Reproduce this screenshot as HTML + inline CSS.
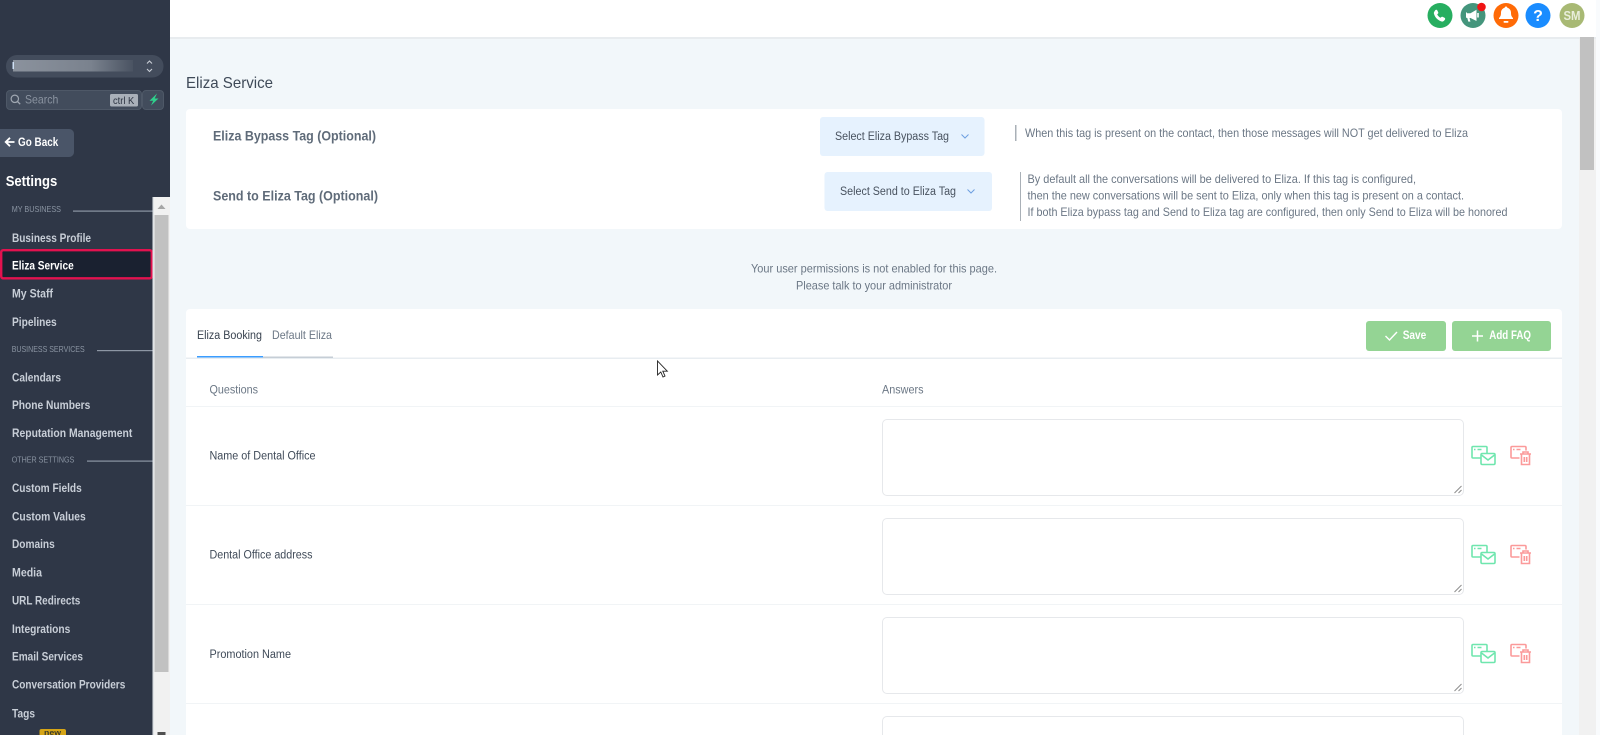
<!DOCTYPE html>
<html><head><meta charset="utf-8"><title>Eliza Service</title>
<style>
html,body{margin:0;padding:0;width:1600px;height:735px;overflow:hidden;background:#f2f7fa}
svg{display:block;position:absolute;left:0;top:0}
text{font-family:"Liberation Sans",sans-serif;font-size:12px}
.nav{font-weight:bold;fill:#c8ced7;font-size:11.5px}
.sec{fill:#8b95a3;font-size:8.5px}
.m{fill:#6b7785;font-size:12px}
.d{fill:#3f4a58;font-size:11.5px}
.lbl{font-weight:bold;fill:#5f6b79;font-size:13.5px}
.btn{fill:#48525f;font-size:11.5px}
.w{fill:#fff;font-weight:bold;font-size:11.5px}
</style></head><body>
<svg width="1600" height="735" viewBox="0 0 1600 735" xmlns="http://www.w3.org/2000/svg">
<defs>
<linearGradient id="bl" x1="0" x2="1" y1="0" y2="0"><stop offset="0" stop-color="#8b929d"/><stop offset=".65" stop-color="#7a828e"/><stop offset="1" stop-color="#4a5362"/></linearGradient>
</defs>
<rect width="1600" height="735" fill="#f2f7fa"/>

<!-- top bar -->
<rect x="1596" y="0" width="4" height="735" fill="#f9fbfd"/>
<rect x="170" y="37" width="1426" height="2" fill="#e8ecef"/>
<rect x="170" y="0" width="1426" height="37" fill="#fff"/>

<circle cx="1440" cy="15.5" r="12.5" fill="#27ae60"/>
<path d="M1435.2 10.2c.7-.7 1.700-.6 2.100.2l.9 1.800c.3.600.1 1.200-.4 1.600l-.6.500c.6 1.500 1.800 2.800 3.300 3.500l.6-.6c.4-.4 1-.5 1.600-.3l1.800.9c.8.400.9 1.400.3 2.100l-.9 1c-.7.700-1.700.9-2.700.5-3.500-1.300-6.200-4-7.200-7.500-.3-1-.1-2 .6-2.700z" fill="#fff"/>
<circle cx="1473" cy="15.5" r="12.5" fill="#44957c"/>
<path d="M1467 13.200h3.500l6-3.400v11.200l-6-3h-1l.9 3.600h-2.100l-1-3.600H1467c-.6 0-1-.4-1-1v-3.800c0-.6.400-1 1-1z" fill="#fff"/><path d="M1478 13v4.500" stroke="#fff" stroke-width="1.600"/>
<circle cx="1481.5" cy="7" r="4.3" fill="#f01414"/>
<circle cx="1506" cy="15.5" r="12.5" fill="#ff6a06"/>
<path d="M1506 6.500c.8 0 1.300.5 1.300 1.200 2.400.6 3.700 2.600 3.700 5.100 0 2.600.6 3.900 2 5.200v1h-14v-1c1.400-1.300 2-2.600 2-5.200 0-2.500 1.300-4.500 3.700-5.100 0-.7.500-1.200 1.300-1.200z" fill="#fff"/><rect x="1503.500" y="21" width="5" height="1.800" rx=".9" fill="#fff"/>
<circle cx="1538" cy="15.5" r="12.5" fill="#1a8cff"/>
<text x="1538" y="21" text-anchor="middle" style="font-size:16px;font-weight:bold;fill:#fff">?</text>
<circle cx="1572" cy="15.5" r="12.5" fill="#a8b974"/>
<text x="1563.500" y="20" textLength="17" lengthAdjust="spacingAndGlyphs" style="font-size:12.5px;font-weight:bold;fill:#e9eedb">SM</text>

<!-- main scrollbar -->
<rect x="1579" y="39" width="17" height="696" fill="#f1f1f1"/>
<rect x="1580" y="37" width="14" height="133" fill="#c1c1c1"/>

<text x="186" y="88" textLength="87" lengthAdjust="spacingAndGlyphs" style="font-size:16px;fill:#3f4a58">Eliza Service</text>

<!-- card 1 -->
<rect x="186" y="109" width="1376" height="120" rx="4" fill="#fff"/>
<text class="lbl" x="213" y="140.500" textLength="163" lengthAdjust="spacingAndGlyphs">Eliza Bypass Tag (Optional)</text>
<text class="lbl" x="213" y="200.500" textLength="165" lengthAdjust="spacingAndGlyphs">Send to Eliza Tag (Optional)</text>
<rect x="820" y="117" width="164.500" height="39" rx="3" fill="#e6f2fe"/>
<text class="btn" x="835" y="140" textLength="114" lengthAdjust="spacingAndGlyphs">Select Eliza Bypass Tag</text>
<path d="M961.500 134.500l3.500 3.500 3.500-3.500" fill="none" stroke="#6d9fe0" stroke-width="1"/>
<rect x="824.500" y="172" width="167.500" height="39" rx="3" fill="#e6f2fe"/>
<text class="btn" x="840" y="195" textLength="116" lengthAdjust="spacingAndGlyphs">Select Send to Eliza Tag</text>
<path d="M967.500 189.500l3.500 3.500 3.500-3.500" fill="none" stroke="#6d9fe0" stroke-width="1"/>

<rect x="1015" y="125" width="1.500" height="16" fill="#a9b0b7"/>
<text class="m" x="1025" y="137" textLength="443" lengthAdjust="spacingAndGlyphs">When this tag is present on the contact, then those messages will NOT get delivered to Eliza</text>
<rect x="1020" y="172" width="1" height="49" fill="#a9b0b7"/>
<text class="m" x="1027.500" y="183" textLength="388.500" lengthAdjust="spacingAndGlyphs">By default all the conversations will be delivered to Eliza. If this tag is configured,</text>
<text class="m" x="1027.500" y="199.500" textLength="436.500" lengthAdjust="spacingAndGlyphs">then the new conversations will be sent to Eliza, only when this tag is present on a contact.</text>
<text class="m" x="1027.500" y="216" textLength="480" lengthAdjust="spacingAndGlyphs">If both Eliza bypass tag and Send to Eliza tag are configured, then only Send to Eliza will be honored</text>

<text class="m" x="751" y="272.500" textLength="246" lengthAdjust="spacingAndGlyphs">Your user permissions is not enabled for this page.</text>
<text class="m" x="796" y="289.500" textLength="156" lengthAdjust="spacingAndGlyphs">Please talk to your administrator</text>

<!-- card 2 -->
<path d="M186 735V313a4 4 0 0 1 4-4h1368a4 4 0 0 1 4 4v422z" fill="#fff"/>
<text class="d" x="197" y="339" textLength="65" lengthAdjust="spacingAndGlyphs" style="fill:#38424f">Eliza Booking</text>
<text class="m" x="272" y="339" textLength="60" lengthAdjust="spacingAndGlyphs">Default Eliza</text>
<rect x="186" y="357.500" width="1376" height="1.500" fill="#e8edf1"/>
<rect x="263" y="356.500" width="70" height="1.500" fill="#c6ced6"/>
<rect x="197" y="356" width="66" height="1.500" fill="#3b9dff"/>

<rect x="1366" y="321" width="80" height="30" rx="3" fill="#94d494"/>
<path d="M1385.500 336l4 4 7.500-8" fill="none" stroke="#fff" stroke-width="1.400"/>
<text class="w" x="1402.700" y="339" textLength="23.600" lengthAdjust="spacingAndGlyphs">Save</text>
<rect x="1452" y="321" width="99" height="30" rx="3" fill="#94d494"/>
<path d="M1477.500 330.500v11M1472 336h11" stroke="#fff" stroke-width="1.500"/>
<text class="w" x="1489.300" y="339" textLength="41.700" lengthAdjust="spacingAndGlyphs">Add FAQ</text>

<text class="m" x="209.500" y="393.500" textLength="48.500" lengthAdjust="spacingAndGlyphs" style="font-size:11.500px">Questions</text>
<text class="m" x="882" y="393.500" textLength="41.500" lengthAdjust="spacingAndGlyphs" style="font-size:11.500px">Answers</text>
<rect x="186" y="406" width="1376" height="1" fill="#f1f4f6"/>
<rect x="186" y="505" width="1376" height="1" fill="#f1f4f6"/>
<rect x="186" y="604" width="1376" height="1" fill="#f1f4f6"/>
<rect x="186" y="703" width="1376" height="1" fill="#f1f4f6"/>

<text class="d" x="209.500" y="459.500" textLength="106" lengthAdjust="spacingAndGlyphs">Name of Dental Office</text>
<text class="d" x="209.500" y="558.500" textLength="103" lengthAdjust="spacingAndGlyphs">Dental Office address</text>
<text class="d" x="209.500" y="658" textLength="81.500" lengthAdjust="spacingAndGlyphs">Promotion Name</text>

<!-- textareas -->
<rect x="882.500" y="419.500" width="581" height="76" rx="4.500" fill="#fff" stroke="#e6e8eb"/>
<path d="M1454.500 493l7-7M1458.500 493l3-3" stroke="#8e8e8e" stroke-width="1"/>
<rect x="882.500" y="518.500" width="581" height="76" rx="4.500" fill="#fff" stroke="#e6e8eb"/>
<path d="M1454.500 592l7-7M1458.500 592l3-3" stroke="#8e8e8e" stroke-width="1"/>
<rect x="882.500" y="617.500" width="581" height="76" rx="4.500" fill="#fff" stroke="#e6e8eb"/>
<path d="M1454.500 691l7-7M1458.500 691l3-3" stroke="#8e8e8e" stroke-width="1"/>
<path d="M882.500 735V721a4.500 4.500 0 0 1 4.500-4.500h572a4.500 4.500 0 0 1 4.500 4.500v14" fill="#fff" stroke="#e6e8eb"/>

<!-- row icons -->
<g fill="none" stroke="#6fe6ae" stroke-width="1.600" transform="translate(-.5 0)">
<g><path d="M1481 458h-7.500c-.6 0-1-.4-1-1v-9.500c0-.6.400-1 1-1h13c.6 0 1 .4 1 1v5.500"/><path d="M1474.500 449.500h1.500M1478 449.500h4"/><rect x="1481.500" y="453.500" width="14" height="11" rx="1.200"/><path d="M1482 455l6.500 5 6.500-5"/></g>
<g transform="translate(0 99)"><path d="M1481 458h-7.500c-.6 0-1-.4-1-1v-9.500c0-.6.400-1 1-1h13c.6 0 1 .4 1 1v5.500"/><path d="M1474.500 449.500h1.500M1478 449.500h4"/><rect x="1481.500" y="453.500" width="14" height="11" rx="1.200"/><path d="M1482 455l6.500 5 6.500-5"/></g>
<g transform="translate(0 198)"><path d="M1481 458h-7.500c-.6 0-1-.4-1-1v-9.500c0-.6.400-1 1-1h13c.6 0 1 .4 1 1v5.500"/><path d="M1474.500 449.500h1.500M1478 449.500h4"/><rect x="1481.500" y="453.500" width="14" height="11" rx="1.200"/><path d="M1482 455l6.500 5 6.500-5"/></g>
</g>
<g fill="none" stroke="#fb9a9a" stroke-width="1.600" transform="translate(-.5 0)">
<g><path d="M1520 458h-7.500c-.6 0-1-.4-1-1v-9.500c0-.6.400-1 1-1h13c.6 0 1 .4 1 1v3"/><path d="M1513.500 449.500h1.500M1517 449.500h4"/><path d="M1520.500 454h11M1523.500 454v-2h5v2M1522 454v10.500h8V454M1524.800 457v5M1527.200 457v5"/></g>
<g transform="translate(0 99)"><path d="M1520 458h-7.500c-.6 0-1-.4-1-1v-9.500c0-.6.400-1 1-1h13c.6 0 1 .4 1 1v3"/><path d="M1513.500 449.500h1.500M1517 449.500h4"/><path d="M1520.500 454h11M1523.500 454v-2h5v2M1522 454v10.500h8V454M1524.800 457v5M1527.200 457v5"/></g>
<g transform="translate(0 198)"><path d="M1520 458h-7.500c-.6 0-1-.4-1-1v-9.500c0-.6.400-1 1-1h13c.6 0 1 .4 1 1v3"/><path d="M1513.500 449.500h1.500M1517 449.500h4"/><path d="M1520.500 454h11M1523.500 454v-2h5v2M1522 454v10.500h8V454M1524.800 457v5M1527.200 457v5"/></g>
</g>

<!-- cursor -->
<path d="M657.500 361v14l3.300-3 2.200 5 2-1-2.200-4.800h4.500z" fill="#fff" stroke="#222" stroke-width=".9"/>

<!-- sidebar -->
<rect x="0" y="0" width="170" height="735" fill="#2f3747"/>
<rect x="6" y="55" width="157.500" height="22.500" rx="11" fill="#434c5c"/>
<rect x="13" y="60" width="120" height="11.500" fill="url(#bl)"/>
<rect x="12.500" y="62" width="1.500" height="7" fill="#cfe0f5"/>
<path d="M147 63.500l2.500-2.500 2.500 2.500M147 69l2.500 2.500 2.500-2.500" fill="none" stroke="#c9ced6" stroke-width="1.100"/>
<rect x="6.500" y="90.500" width="135" height="19" rx="3.500" fill="#424c5c" stroke="#4e5867"/>
<rect x="142.500" y="90.500" width="21" height="19" rx="3.500" fill="#424c5c" stroke="#4e5867"/>
<circle cx="14.800" cy="98.800" r="3.700" fill="none" stroke="#a0a8b2" stroke-width="1.200"/><path d="M17.500 101.500l2.700 2.700" stroke="#a0a8b2" stroke-width="1.300"/>
<text x="25" y="103.500" textLength="33.300" lengthAdjust="spacingAndGlyphs" style="fill:#8a93a0;font-size:12px">Search</text>
<rect x="110" y="94" width="28" height="12.500" rx="1.500" fill="#a9b0b9"/>
<text x="113" y="103.800" textLength="21.300" lengthAdjust="spacingAndGlyphs" style="fill:#2c3442;font-size:10px">ctrl K</text>
<path d="M157 93.500l-7.500 7.300h3.700l-2.200 4.700 7.500-7h-3.800z" fill="#2fd08c"/>

<path d="M0 129h69c2.800 0 5 2.200 5 5v18c0 2.800-2.200 5-5 5H0z" fill="#4a5568"/>
<path d="M14.500 142H6.500M10 137.800l-4.300 4.200 4.300 4.200" fill="none" stroke="#fff" stroke-width="1.800"/>
<text class="w" x="18" y="146" textLength="40.300" lengthAdjust="spacingAndGlyphs">Go Back</text>
<text x="5.700" y="186" textLength="51.600" lengthAdjust="spacingAndGlyphs" style="font-size:15px;font-weight:bold;fill:#fff">Settings</text>

<text class="sec" x="11.700" y="212" textLength="49.300" lengthAdjust="spacingAndGlyphs">MY BUSINESS</text>
<rect x="73" y="210.500" width="80" height="1.200" fill="#8d96a4"/>
<text class="nav" x="12" y="241.800" textLength="79" lengthAdjust="spacingAndGlyphs">Business Profile</text>

<rect x="1.200" y="250.200" width="150.600" height="28.100" rx="2" fill="#1a2130" stroke="#e2124f" stroke-width="2.400"/>
<text class="nav" x="12" y="269.500" textLength="61.700" lengthAdjust="spacingAndGlyphs" style="fill:#fff">Eliza Service</text>
<text class="nav" x="12" y="297.600" textLength="41" lengthAdjust="spacingAndGlyphs">My Staff</text>
<text class="nav" x="12" y="325.800" textLength="44.700" lengthAdjust="spacingAndGlyphs">Pipelines</text>
<text class="sec" x="11.700" y="352" textLength="73" lengthAdjust="spacingAndGlyphs">BUSINESS SERVICES</text>
<rect x="97" y="350" width="56" height="1.200" fill="#8d96a4"/>
<text class="nav" x="12" y="381.400" textLength="49" lengthAdjust="spacingAndGlyphs">Calendars</text>
<text class="nav" x="12" y="408.800" textLength="78.300" lengthAdjust="spacingAndGlyphs">Phone Numbers</text>
<text class="nav" x="12" y="437" textLength="120.300" lengthAdjust="spacingAndGlyphs">Reputation Management</text>
<text class="sec" x="11.700" y="462.700" textLength="62.600" lengthAdjust="spacingAndGlyphs">OTHER SETTINGS</text>
<rect x="87" y="460.500" width="66" height="1.200" fill="#8d96a4"/>
<text class="nav" x="12" y="492" textLength="69.700" lengthAdjust="spacingAndGlyphs">Custom Fields</text>
<text class="nav" x="12" y="520.300" textLength="73.700" lengthAdjust="spacingAndGlyphs">Custom Values</text>
<text class="nav" x="12" y="548" textLength="42.700" lengthAdjust="spacingAndGlyphs">Domains</text>
<text class="nav" x="12" y="576.300" textLength="30" lengthAdjust="spacingAndGlyphs">Media</text>
<text class="nav" x="12" y="604.600" textLength="68.300" lengthAdjust="spacingAndGlyphs">URL Redirects</text>
<text class="nav" x="12" y="633.200" textLength="58.300" lengthAdjust="spacingAndGlyphs">Integrations</text>
<text class="nav" x="12" y="660.500" textLength="71" lengthAdjust="spacingAndGlyphs">Email Services</text>
<text class="nav" x="12" y="688.600" textLength="113.300" lengthAdjust="spacingAndGlyphs">Conversation Providers</text>
<text class="nav" x="12" y="717.300" textLength="23" lengthAdjust="spacingAndGlyphs">Tags</text>
<path d="M39.500 735v-4a2 2 0 0 1 2-2H64a2 2 0 0 1 2 2v4z" fill="#d6a516"/>
<text x="44" y="735" textLength="17" lengthAdjust="spacingAndGlyphs" style="font-size:7px;fill:#3a3a2a;font-weight:bold">new</text>

<!-- sidebar scrollbar -->
<rect x="152.500" y="197" width="17.500" height="538" fill="#f1f1f1"/>
<rect x="152.500" y="197" width="1.500" height="538" fill="#dfe3e6"/>
<rect x="154.500" y="215" width="14" height="457" fill="#c1c1c1"/>
<path d="M157.500 209l4-4.500 4 4.500z" fill="#a6a6a6"/>
<path d="M157.500 732h8v3h-8z" fill="#505050"/>
</svg>
</body></html>
